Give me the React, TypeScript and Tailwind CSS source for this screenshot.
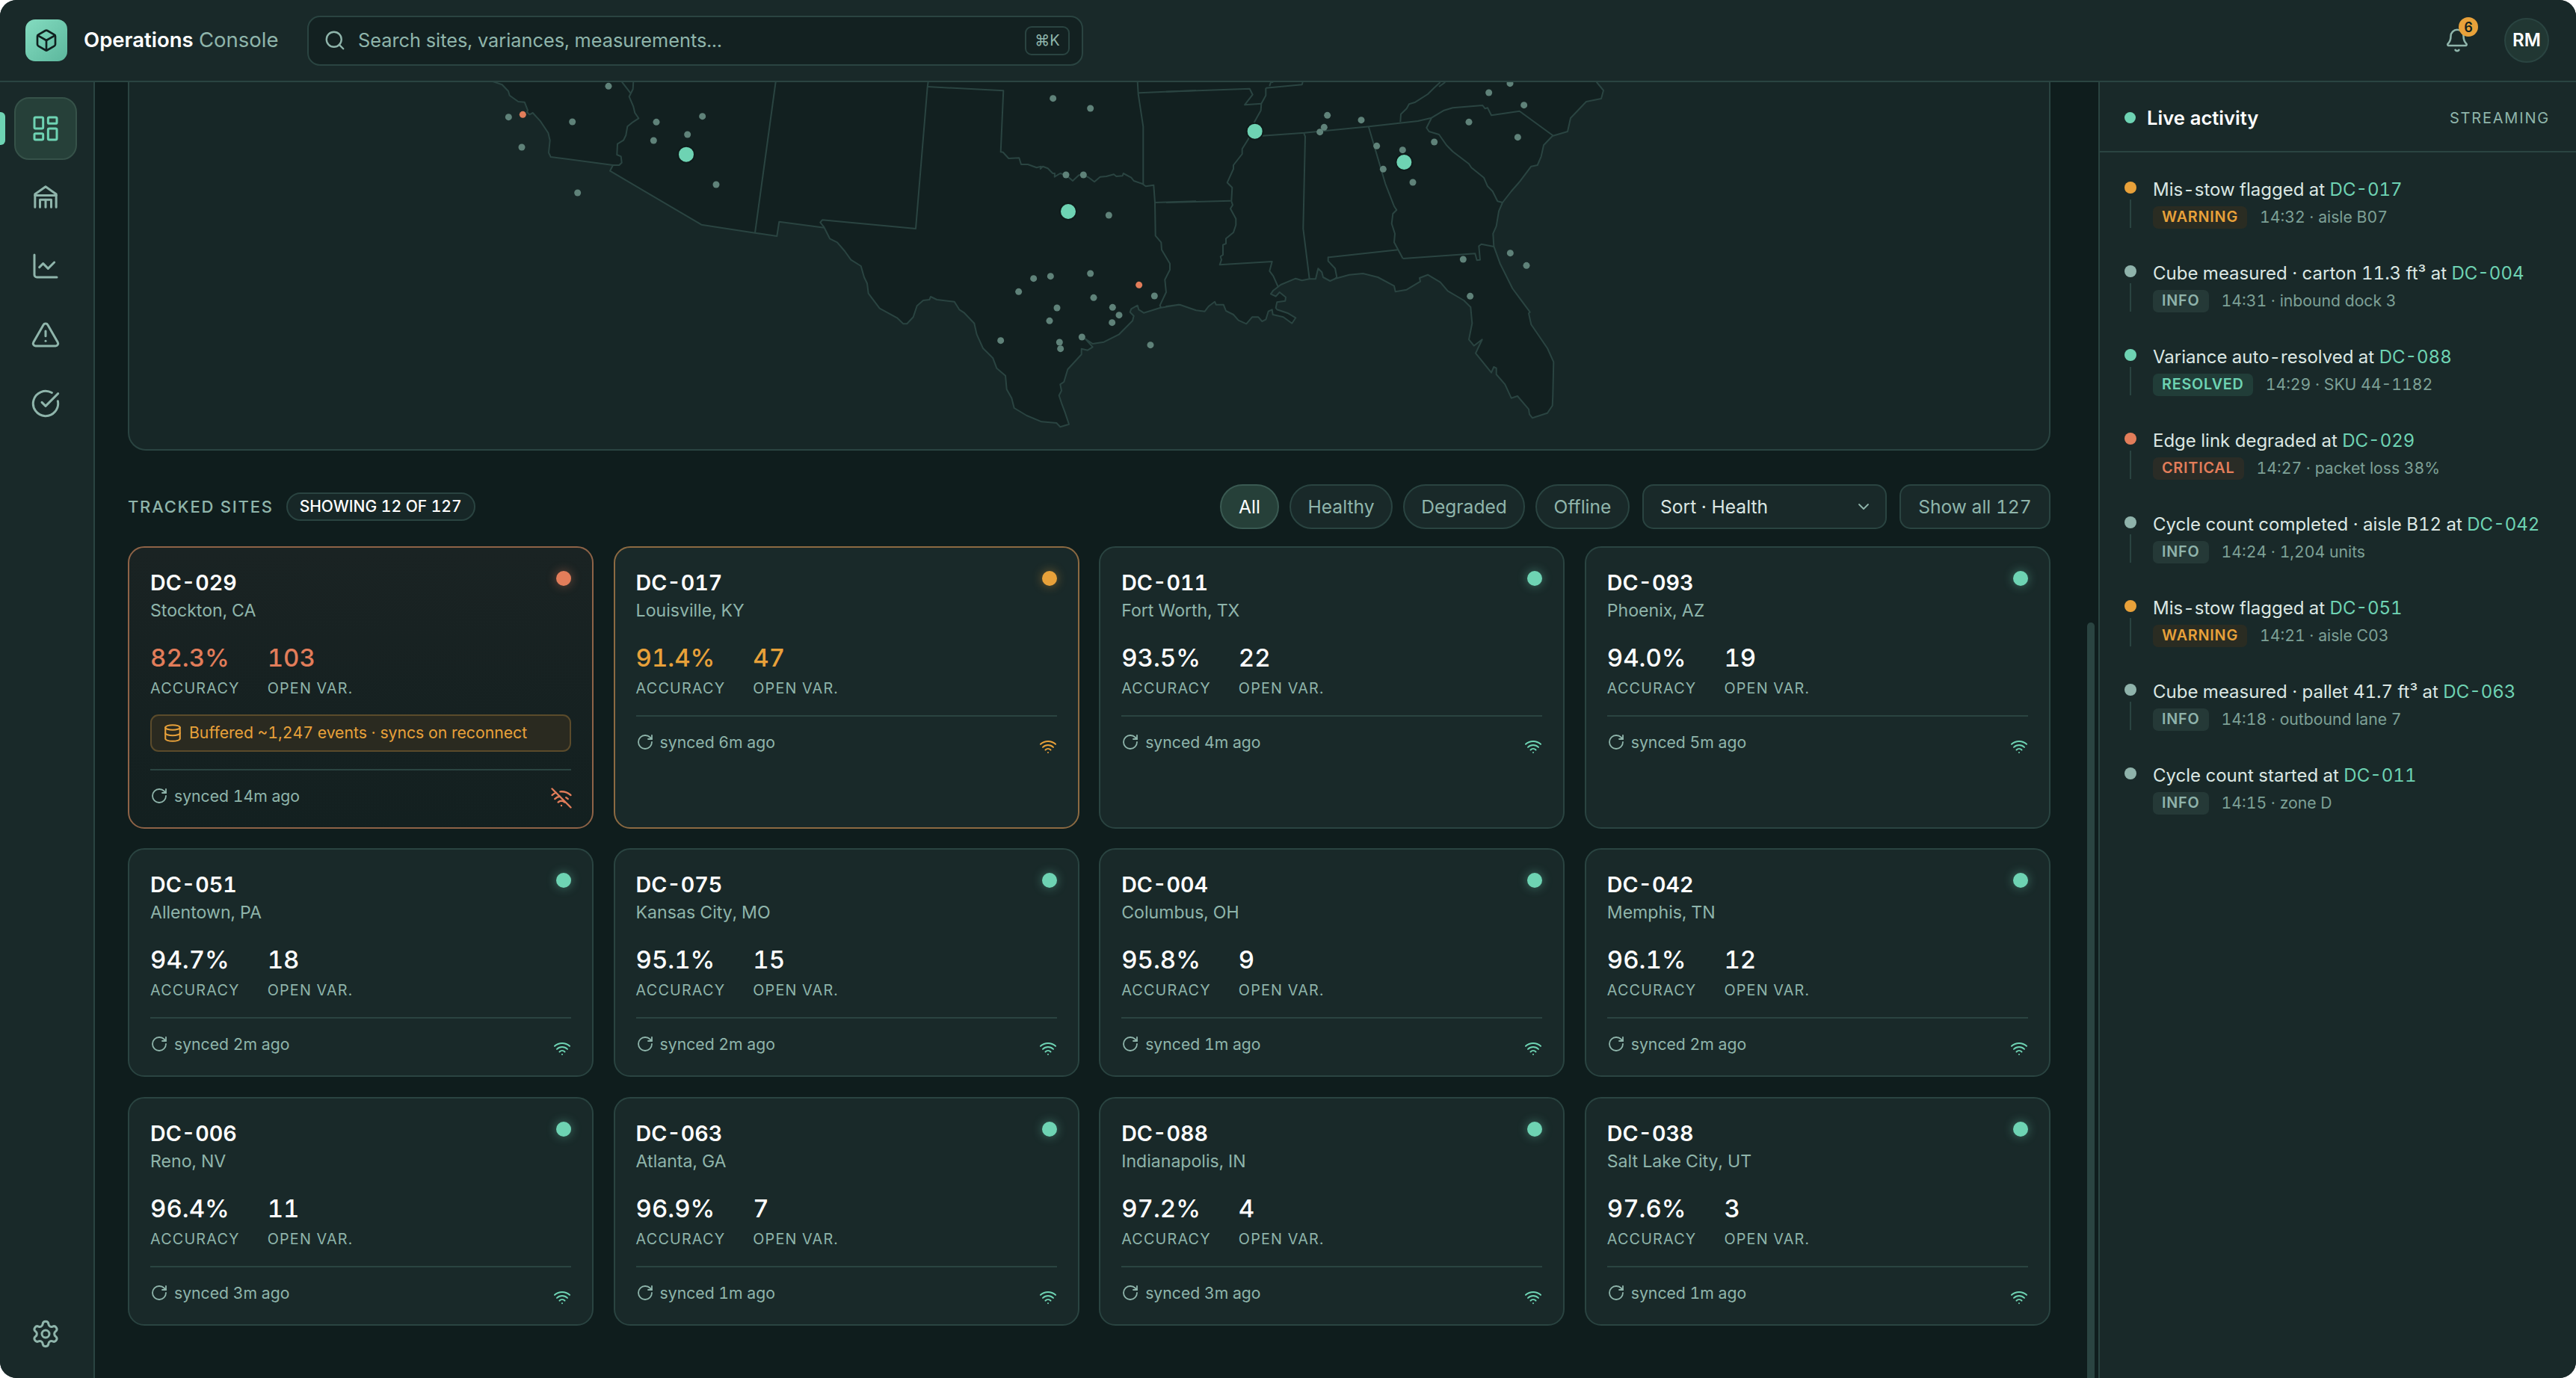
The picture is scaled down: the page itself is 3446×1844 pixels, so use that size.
import {
  Bell,
  Box,
  ChartLine,
  ChevronDown,
  CircleCheckBig,
  Database,
  LayoutDashboard,
  RotateCw,
  Search,
  Settings,
  TriangleAlert,
  Wifi,
  WifiOff,
} from 'lucide-react';

// map outlines were traced in three crops, each with its own x origin
const trace = (ox: number, s: string) =>
  s
    .trim()
    .split(/\s+/)
    .map((pt) => {
      const [x, y] = pt.split(',').map(Number);
      return `${(ox + x / 3).toFixed(1)} ${(106 + y / 3).toFixed(1)}`;
    });

const line = (ox: number, s: string) => 'M' + trace(ox, s).join('L');

const LAND =
  'M' +
  [
    ...trace(
      640,
      '60,10 95,22 120,48 125,65 160,90 185,92 198,125 195,132 205,142 218,135 250,170 280,215 287,245 282,295 290,312 540,345 528,368 895,584 1110,617 1198,630 1207,572 1388,596 1410,640 1440,655 1470,690 1495,725 1535,750 1548,795',
    ),
    ...trace(
      1080,
      '240,820 245,860 290,920 360,958 385,982 400,982 425,955 440,910 465,888 490,885 495,873 520,885 590,893 610,925 630,938 670,980 680,1025 705,1080 745,1120 760,1160 795,1190 800,1245 820,1280 830,1320 880,1350 940,1375 1000,1380 1015,1396 1050,1385 1035,1340 1020,1300 1010,1270 1020,1250 1015,1225 1030,1215 1045,1165 1100,1105 1100,1082 1125,1088 1145,1075 1115,1042 1145,1062 1190,1055 1250,1025 1305,970 1310,950 1295,935 1300,922 1325,908 1330,925 1350,938 1415,918 1490,905',
    ),
    ...trace(
      1560,
      '0,912 55,905 120,928 155,932 170,912 195,893 200,905 230,905 240,930 270,945 290,968 322,982 345,955 370,955 385,972 400,965 410,932 425,925 428,945 470,955 505,980 520,958 490,940 445,925 440,918 445,895 478,890 480,875 455,855 440,872 420,862 430,848 460,825 520,800 545,808 575,802 600,802 610,760 625,775 630,795 658,810 680,800 735,785 790,780 850,795 915,830 920,853 965,845 1020,812 1017,798 1050,785 1100,815 1130,850 1195,888 1222,915 1228,980 1215,1045 1235,1070 1268,1045 1242,1100 1305,1178 1315,1155 1325,1160 1325,1185 1360,1225 1385,1280 1410,1272 1455,1325 1458,1345 1470,1360 1530,1340 1550,1310 1552,1270 1555,1135 1530,1080 1465,985 1455,940 1460,935 1390,840 1340,740 1315,670 1312,620 1325,590 1335,530 1350,495 1385,450 1420,410 1465,350 1490,345 1505,310 1515,265 1550,228',
    ),
    '2097 176',
    '2101 158',
    '2122 136',
    '2142 132',
    '2145 121',
    '2136 110',
    '2136 100',
    '660 100',
  ].join('L') +
  'Z';

const BORDERS = [
  line(640, '575,10 610,55'),
  line(640, '622,10 620,40 605,70 622,110 628,135 643,157 620,172 598,190 592,225 582,245 558,260 556,303 572,310 575,335 565,345 540,345'),
  line(640, '1193,10 1110,617'),
  line(1080, '485,10 482,30 435,600 60,565 52,575 68,595'),
  line(
    1080,
    '482,30 787,46 776,292 785,293 808,318 850,316 858,342 885,342 920,355 938,350 935,360 945,350 965,358 985,378 993,378 992,392 1015,378 1038,385 1065,408 1090,385 1110,385 1130,395 1152,412 1175,392 1200,390 1230,382 1240,390 1265,388 1268,378 1300,395 1310,408 1345,420 1358,430 1390,425 1395,495 1397,628 1420,655 1422,685 1455,740 1455,765 1435,805 1440,855 1415,908 1420,918',
  ),
  line(1080, '1325,10 1328,60 1348,190 1348,420'),
  line(1080, '1328,55 1560,45'),
  line(1080, '1395,495 1560,490'),
  line(1560, '0,50 335,38 347,62 315,103 382,98'),
  line(
    1560,
    '400,35 400,65 382,98 380,125 358,165 345,190 330,240 305,280 305,300 270,345 270,360 245,415 265,435 262,490 267,505 258,520 280,560 280,585 270,615 240,640 240,660 228,665 228,705 218,712 222,725 215,745 425,732 415,770 430,790 450,835',
  ),
  line(1560, '400,35 545,22 548,12'),
  line(1560, '415,28 420,12 430,12'),
  line(1560, '0,495 258,488'),
  line(1560, '385,227 555,215 815,190 1010,168 1065,155'),
  line(1560, '940,172 942,140 965,118 975,100 1000,92 1050,60 1075,35 1100,12'),
  line(1560, '1095,30 1120,12'),
  line(1560, '553,217 558,230 550,600 575,802'),
  line(1560, '812,190 880,420 915,510 925,525 910,540 905,580 918,620 915,655 950,720'),
  line(1560, '930,685 650,715 650,730 678,760 685,795 672,805'),
  line(1560, '950,720 1240,700 1247,727 1260,725 1255,670 1265,662 1315,672'),
  line(1560, '1065,155 1045,195 1055,210 1095,222 1125,265 1150,290 1215,340 1225,355 1275,395 1290,430 1310,450 1330,490 1350,495'),
  line(1560, '1065,155 1115,125 1150,115 1270,105 1280,118 1290,115 1305,145 1418,128 1555,228'),
];

const at = (ox: number, s: string) =>
  s
    .trim()
    .split(/\s+/)
    .map((pt) => {
      const [x, y] = pt.split(',').map(Number);
      return { x: ox + x / 3, y: 106 + y / 3 };
    });

const DOTS = [
  ...at(640, '121,152 377,171 174,273 398,456 522,28 714,172 899,149 839,222 703,246 954,423'),
  ...at(
    1080,
    '986,77 1136,117 1038,384 1108,384 1210,546 1136,780 976,791 908,800 848,853 1149,877 1002,918 1225,916 1251,947 1223,977 972,970 776,1049 1102,1035 1012,1056 1016,1082 1393,870 1377,1067',
  ),
  ...at(
    1560,
    '647,145 783,164 634,193 617,212 845,268 949,284 871,361 990,414 1076,252 1215,172 1295,54 1380,17 1436,104 1411,233 1381,698 1446,748 1192,723 1220,871',
  ),
];
const ALERTS = [...at(640, '178,142'), ...at(1080, '1331,826')];
const HUBS = [...at(640, '834,302'), ...at(1080, '1047,531'), ...at(1560, '356,209 955,333')];

type Health = 'ok' | 'warn' | 'crit';

type Site = {
  id: string;
  city: string;
  acc: string;
  open: number;
  synced: string;
  health?: Health;
  buffered?: string;
};

const SITES: Site[] = [
  { id: 'DC-029', city: 'Stockton, CA', acc: '82.3%', open: 103, synced: '14m', health: 'crit', buffered: 'Buffered ~1,247 events · syncs on reconnect' },
  { id: 'DC-017', city: 'Louisville, KY', acc: '91.4%', open: 47, synced: '6m', health: 'warn' },
  { id: 'DC-011', city: 'Fort Worth, TX', acc: '93.5%', open: 22, synced: '4m' },
  { id: 'DC-093', city: 'Phoenix, AZ', acc: '94.0%', open: 19, synced: '5m' },
  { id: 'DC-051', city: 'Allentown, PA', acc: '94.7%', open: 18, synced: '2m' },
  { id: 'DC-075', city: 'Kansas City, MO', acc: '95.1%', open: 15, synced: '2m' },
  { id: 'DC-004', city: 'Columbus, OH', acc: '95.8%', open: 9, synced: '1m' },
  { id: 'DC-042', city: 'Memphis, TN', acc: '96.1%', open: 12, synced: '2m' },
  { id: 'DC-006', city: 'Reno, NV', acc: '96.4%', open: 11, synced: '3m' },
  { id: 'DC-063', city: 'Atlanta, GA', acc: '96.9%', open: 7, synced: '1m' },
  { id: 'DC-088', city: 'Indianapolis, IN', acc: '97.2%', open: 4, synced: '3m' },
  { id: 'DC-038', city: 'Salt Lake City, UT', acc: '97.6%', open: 3, synced: '1m' },
];

type Level = 'WARNING' | 'INFO' | 'RESOLVED' | 'CRITICAL';

const LEVELS: Record<Level, { dot: string; badge: string }> = {
  WARNING: { dot: 'bg-[#e8a13a]', badge: 'bg-[#2a2c22] text-[#e8a13a]' },
  INFO: { dot: 'bg-[#8fb3ab]', badge: 'bg-[#253937] text-[#8fb3ab]' },
  RESOLVED: { dot: 'bg-[#6ed3b3]', badge: 'bg-[#213d38] text-[#6ed3b3]' },
  CRITICAL: { dot: 'bg-[#e27d5a]', badge: 'bg-[#2a2c26] text-[#e27d5a]' },
};

const EVENTS: { text: string; site: string; level: Level; meta: string }[] = [
  { text: 'Mis-stow flagged at', site: 'DC-017', level: 'WARNING', meta: '14:32 · aisle B07' },
  { text: 'Cube measured · carton 11.3 ft³ at', site: 'DC-004', level: 'INFO', meta: '14:31 · inbound dock 3' },
  { text: 'Variance auto-resolved at', site: 'DC-088', level: 'RESOLVED', meta: '14:29 · SKU 44-1182' },
  { text: 'Edge link degraded at', site: 'DC-029', level: 'CRITICAL', meta: '14:27 · packet loss 38%' },
  { text: 'Cycle count completed · aisle B12 at', site: 'DC-042', level: 'INFO', meta: '14:24 · 1,204 units' },
  { text: 'Mis-stow flagged at', site: 'DC-051', level: 'WARNING', meta: '14:21 · aisle C03' },
  { text: 'Cube measured · pallet 41.7 ft³ at', site: 'DC-063', level: 'INFO', meta: '14:18 · outbound lane 7' },
  { text: 'Cycle count started at', site: 'DC-011', level: 'INFO', meta: '14:15 · zone D' },
];

// lucide's warehouse has a boxed body, the one in the rail is an open barn
const Barn = ({ className }: { className?: string }) => (
  <svg viewBox="0 0 24 24" fill="none" stroke="currentColor" strokeWidth="1.8" strokeLinecap="round" strokeLinejoin="round" className={className}>
    <path d="M3.5 20V9.5L12 3.5l8.5 6V20" />
    <path d="M3.5 10.5h17" />
    <path d="M7.5 20v-6h9v6" />
    <path d="M12 14v6" />
  </svg>
);

function SiteCard({ site }: { site: Site }) {
  const { health = 'ok' } = site;
  const frame =
    health === 'crit'
      ? 'border-[#8e6347] bg-gradient-to-b from-[#1a2323] to-[#132020]'
      : health === 'warn'
        ? 'border-[#8c6a42] bg-[#192929]'
        : 'border-[#2a4441] bg-[#192929]';
  const dot =
    health === 'crit'
      ? 'bg-[#e27d5a] shadow-[0_0_14px_rgba(226,125,90,0.45)]'
      : health === 'warn'
        ? 'bg-[#e8a13a] shadow-[0_0_14px_rgba(232,161,58,0.45)]'
        : 'bg-[#6ed3b3] shadow-[0_0_14px_rgba(110,211,179,0.45)]';
  const value = health === 'crit' ? 'text-[#e27d5a]' : health === 'warn' ? 'text-[#e8a13a]' : 'text-white';

  return (
    <div className={`flex flex-col rounded-[22px] border-2 px-[28px] pt-[27px] ${frame}`}>
      <div className="flex items-start justify-between">
        <div>
          <div className="text-[28.6px] leading-[40px] font-semibold text-white">{site.id}</div>
          <div className="mt-[-1px] text-[23.1px] leading-[36px] text-[#8fb5ab]">{site.city}</div>
        </div>
        <span className={`mt-[4px] h-[20px] w-[20px] rounded-full ${dot}`} />
      </div>

      <div className="mt-[23px] flex gap-[37px]">
        <div>
          <div className={`text-[33px] leading-[44px] font-medium ${value}`}>{site.acc}</div>
          <div className="mt-[2px] text-[19.8px] leading-[34px] tracking-[0.06em] text-[#8fb5ab]">ACCURACY</div>
        </div>
        <div>
          <div className={`text-[33px] leading-[44px] font-medium ${value}`}>{site.open}</div>
          <div className="mt-[2px] text-[19.8px] leading-[34px] tracking-[0.06em] text-[#8fb5ab]">OPEN VAR.</div>
        </div>
      </div>

      {site.buffered && (
        <div className="mt-[18px] flex h-[50px] items-center gap-[9px] rounded-[11px] border-2 border-[#5b4b2b] bg-[#2a2a20] px-[15px] text-[21.2px] whitespace-nowrap text-[#e8a13a]">
          <Database className="h-[26px] w-[26px]" strokeWidth={1.9} />
          {site.buffered}
        </div>
      )}

      <div className={`${site.buffered ? 'mt-[23px]' : 'mt-[19px]'} flex items-end justify-between border-t-2 border-[#2a4441] pt-[16px] pb-[24px]`}>
        <div className="flex items-center gap-[8px] text-[21.2px] leading-[36px] text-[#8fb5ab]">
          <RotateCw className="h-[24px] w-[24px]" strokeWidth={1.8} />
          synced {site.synced} ago
        </div>
        {health === 'crit' ? (
          <WifiOff className="mr-[-2px] h-[30px] w-[30px] text-[#e27d5a]" strokeWidth={1.9} />
        ) : (
          <Wifi className={`h-[24px] w-[24px] ${health === 'warn' ? 'text-[#e8a13a]' : 'text-[#6ed3b3]'}`} strokeWidth={2} />
        )}
      </div>
    </div>
  );
}

function MapPanel() {
  return (
    <div className="h-[493px] overflow-hidden rounded-b-[24px] border-x-2 border-b-2 border-[#2a4441] bg-[#172727]">
      <svg viewBox="173 110 2568 491" className="block h-full w-full">
        <path d={LAND} fill="#122020" stroke="#2a4441" strokeWidth="2" strokeLinejoin="round" />
        {BORDERS.map((d, i) => (
          <path key={i} d={d} fill="none" stroke="#2a4441" strokeWidth="2" strokeLinejoin="round" />
        ))}
        {DOTS.map((d, i) => (
          <circle key={i} cx={d.x} cy={d.y} r="4.5" fill="#5f8279" />
        ))}
        {ALERTS.map((d, i) => (
          <circle key={i} cx={d.x} cy={d.y} r="4.5" fill="#e27d5a" />
        ))}
        {HUBS.map((d, i) => (
          <circle key={i} cx={d.x} cy={d.y} r="11" fill="#6ed3b3" stroke="#0f1b1b" strokeWidth="2" />
        ))}
      </svg>
    </div>
  );
}

export default function App() {
  return (
    <div className="flex h-[1844px] w-[3446px] flex-col overflow-hidden rounded-[22px] bg-[#0f1d1d] tabular-nums [font-family:Inter,sans-serif]">
      {/* Top bar */}
      <header className="flex h-[110px] shrink-0 items-center border-b-2 border-[#2a4441] bg-[#192929] pr-[36px] pl-[34px]">
        <div className="flex h-[56px] w-[56px] items-center justify-center rounded-[13px] bg-gradient-to-br from-[#84dcc0] to-[#5cb79d]">
          <Box className="h-[32px] w-[32px] text-[#10201f]" strokeWidth={2} />
        </div>
        <div className="ml-[22px] w-[261px] text-[27.5px] font-semibold whitespace-nowrap text-white">
          Operations <span className="font-normal text-[#8fb5ab]">Console</span>
        </div>
        <div className="ml-[38px] flex h-[67px] w-[1038px] items-center rounded-[17px] border-2 border-[#2a4441] bg-[#132121] pr-[16px] pl-[20px]">
          <Search className="h-[30px] w-[30px] text-[#8fb5ab]" strokeWidth={1.9} />
          <span className="ml-[16px] flex-1 text-[25.3px] text-[#8fb5ab]">Search sites, variances, measurements...</span>
          <kbd className="flex h-[39px] w-[60px] items-center justify-center rounded-[9px] border-2 border-[#2a4441] text-[20px] text-[#8fb5ab] [font-family:Inter,'DejaVu_Sans',sans-serif]">
            ⌘K
          </kbd>
        </div>
        <div className="relative ml-auto">
          <Bell className="h-[34px] w-[34px] text-[#8fb5ab]" strokeWidth={1.8} />
          <span className="absolute top-[-14px] right-[-11px] flex h-[26px] w-[26px] items-center justify-center rounded-full bg-[#e8a13a] text-[18px] font-semibold text-[#10201f]">
            6
          </span>
        </div>
        <div className="ml-[46px] flex h-[60px] w-[60px] items-center justify-center rounded-full border-2 border-[#2a4441] bg-[#213733] text-[24px] font-semibold text-white">
          RM
        </div>
      </header>

      <div className="flex min-h-0 flex-1">
        {/* Left rail */}
        <nav className="relative flex w-[127px] shrink-0 flex-col items-center gap-[8px] border-r-2 border-[#2a4441] bg-[#192929] pt-[20px] pr-[3px] pb-[17px] text-[#8fb5ab]">
          <span className="absolute top-[40px] left-0 h-[44px] w-[7px] rounded-r-[6px] bg-[#6ed3b3]" />
          <div className="flex h-[84px] w-[84px] items-center justify-center rounded-[20px] border-2 border-[#365249] bg-[#264039] text-[#6ed3b3]">
            <LayoutDashboard className="h-[40px] w-[40px]" strokeWidth={1.8} />
          </div>
          {[Barn, ChartLine, TriangleAlert, CircleCheckBig].map((Icon, i) => (
            <div key={i} className="flex h-[84px] w-[84px] items-center justify-center">
              <Icon className="h-[40px] w-[40px]" strokeWidth={1.8} />
            </div>
          ))}
          <div className="mt-auto flex h-[84px] w-[84px] items-center justify-center">
            <Settings className="h-[40px] w-[40px]" strokeWidth={1.8} />
          </div>
        </nav>

        {/* Main column */}
        <main className="relative min-w-0 flex-1 overflow-hidden pr-[64px] pl-[44px]">
          <MapPanel />

          <div className="mt-[45px] flex h-[60px] items-center">
            <span className="text-[22px] font-medium tracking-[0.08em] text-[#8fb5ab]">TRACKED SITES</span>
            <span className="ml-[17px] flex h-[38px] items-center rounded-full border-2 border-[#2a4441] bg-[#172727] px-[16px] text-[21px] font-medium text-white">
              SHOWING 12 OF 127
            </span>
            <div className="ml-auto flex items-center gap-[14px] text-[24.6px] text-[#8fb5ab]">
              <button className="h-[60px] w-[79px] rounded-full border-2 border-[#3a5a52] bg-[#264039] text-white">All</button>
              <button className="h-[60px] w-[138px] rounded-full border-2 border-[#2a4441] bg-[#192929]">Healthy</button>
              <button className="h-[60px] w-[163px] rounded-full border-2 border-[#2a4441] bg-[#192929]">Degraded</button>
              <button className="h-[60px] w-[126px] rounded-full border-2 border-[#2a4441] bg-[#192929]">Offline</button>
              <button className="ml-[3px] flex h-[60px] w-[327px] items-center justify-between rounded-[15px] border-2 border-[#2a4441] bg-[#192929] pr-[17px] pl-[22px] text-[#dbe7e3]">
                Sort · Health
                <ChevronDown className="h-[24px] w-[24px] text-[#8fb5ab]" strokeWidth={1.8} />
              </button>
              <button className="ml-[3px] h-[60px] w-[202px] rounded-[15px] border-2 border-[#2a4441] bg-[#192929]">Show all 127</button>
            </div>
          </div>

          <div className="mt-[23px] grid grid-cols-4 gap-[26.4px]">
            {SITES.map((s) => (
              <SiteCard key={s.id} site={s} />
            ))}
          </div>

          {/* scrollbar thumb */}
          <div className="absolute top-[723px] right-[5px] bottom-0 w-[10px] rounded-t-[5px] bg-[#2a4441]" />
        </main>

        {/* Activity feed */}
        <aside className="w-[639px] shrink-0 border-l-2 border-[#2a4441] bg-[#192929]">
          <div className="flex h-[94px] items-center justify-between border-b-2 border-[#2a4441] pt-[4px] pr-[35px] pl-[33px]">
            <div className="flex items-center gap-[15px]">
              <span className="h-[15px] w-[15px] rounded-full bg-[#6ed3b3]" />
              <span className="text-[25.6px] font-semibold text-white">Live activity</span>
            </div>
            <span className="text-[20px] tracking-[0.09em] text-[#8fb5ab]">STREAMING</span>
          </div>
          <div className="flex flex-col gap-[39px] pt-[29px] pl-[33px]">
            {EVENTS.map((e, i) => (
              <div key={i} className="flex h-[73px]">
                <div className="flex w-[16px] flex-col items-center pt-[10px]">
                  <span className={`h-[16px] w-[16px] shrink-0 rounded-full ${LEVELS[e.level].dot}`} />
                  {i < EVENTS.length - 1 && <span className="mt-[8px] h-[38px] w-[2px] bg-[#2a4441]" />}
                </div>
                <div className="ml-[22px]">
                  <div className="pt-[2px] text-[24px] leading-[38px] whitespace-nowrap text-[#dbe7e3]">
                    {e.text} <span className="text-[#6ed3b3]">{e.site}</span>
                  </div>
                  <div className="mt-[2px] flex items-center gap-[17px]">
                    <span className={`flex h-[30px] items-center rounded-[7px] px-[12px] text-[19.8px] font-semibold tracking-[0.04em] ${LEVELS[e.level].badge}`}>
                      {e.level}
                    </span>
                    <span className="text-[21.2px] text-[#7da096]">{e.meta}</span>
                  </div>
                </div>
              </div>
            ))}
          </div>
        </aside>
      </div>
    </div>
  );
}
